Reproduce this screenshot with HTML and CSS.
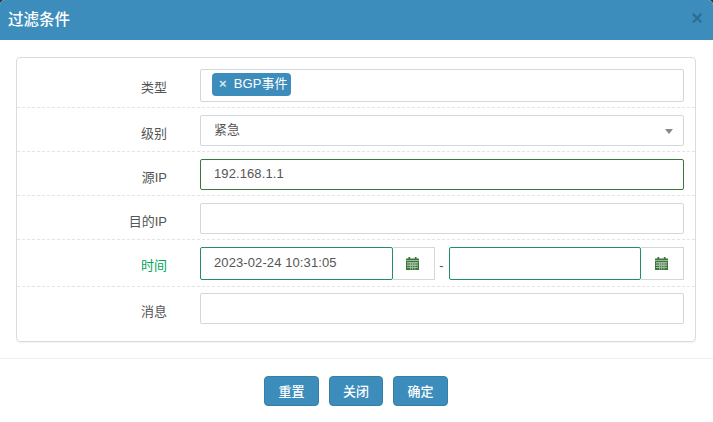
FILE: index.html
```html
<!DOCTYPE html>
<html lang="zh">
<head>
<meta charset="utf-8">
<title>过滤条件</title>
<link rel="stylesheet" href="styles.css">
</head>
<body>
<div class="modal">
  <header class="modal-head">
    <h4 class="modal-title">过滤条件</h4>
    <span class="close">×</span>
  </header>
  <div class="modal-body">
    <div class="panel">
      <div class="row row-first">
        <label class="label">类型</label>
        <div class="control tags"><span class="tag"><span class="tag-x">×</span>BGP事件</span></div>
      </div>
      <div class="row">
        <label class="label">级别</label>
        <div class="control select">紧急<span class="caret"></span></div>
      </div>
      <div class="row">
        <label class="label">源IP</label>
        <div class="control ok-dark">192.168.1.1</div>
      </div>
      <div class="row">
        <label class="label">目的IP</label>
        <div class="control"></div>
      </div>
      <div class="row row-time">
        <label class="label label-ok">时间</label>
        <div class="range">
          <div class="control date ok">2023-02-24 10:31:05</div>
          <span class="addon addon-narrow"><svg class="cal" viewBox="0 0 13 13"><path d="M0 3.4V1.4h2.4V0h1.8v1.4h4.6V0h1.8v1.4H13v2z"/><path fill-rule="evenodd" d="M0 4h13v9H0zM1 5.6v.6h11v-.6zM1 7.8v.6h11v-.6zM1 10v.6h11V10zM4 5v7.4h.5V5zM6.3 5v7.4h.5V5zM8.7 5v7.4h.5V5z"/></svg></span>
          <span class="dash">-</span>
          <div class="control date ok"></div>
          <span class="addon"><svg class="cal" viewBox="0 0 13 13"><path d="M0 3.4V1.4h2.4V0h1.8v1.4h4.6V0h1.8v1.4H13v2z"/><path fill-rule="evenodd" d="M0 4h13v9H0zM1 5.6v.6h11v-.6zM1 7.8v.6h11v-.6zM1 10v.6h11V10zM4 5v7.4h.5V5zM6.3 5v7.4h.5V5zM8.7 5v7.4h.5V5z"/></svg></span>
        </div>
      </div>
      <div class="row row-last">
        <label class="label">消息</label>
        <div class="control"></div>
      </div>
    </div>
  </div>
  <footer class="modal-foot">
    <button class="btn btn-a">重置</button>
    <button class="btn btn-b">关闭</button>
    <button class="btn btn-a">确定</button>
  </footer>
</div>
</body>
</html>
```

FILE: styles.css
```css
* { box-sizing: border-box; }
html, body { margin: 0; padding: 0; }
body {
  width: 713px;
  height: 422px;
  overflow: hidden;
  background: #2a3a44;
  font-family: "Liberation Sans", "Noto Sans CJK SC", sans-serif;
  font-size: 13px;
  color: #555;
}
.modal {
  height: 422px;
  background: #fff;
  border-radius: 5px 5px 0 0;
  overflow: hidden;
  display: flex;
  flex-direction: column;
}
.modal-head {
  height: 40px;
  flex: none;
  background: #3c8dbc;
  color: #fff;
  display: flex;
  align-items: center;
  justify-content: space-between;
  padding: 0 10px 0 8px;
}
.modal-title {
  margin: 0;
  font-size: 15.5px;
  font-weight: 500;
  line-height: 40px;
}
.close {
  font-size: 20px;
  font-weight: 700;
  line-height: 1;
  color: #000;
  opacity: .22;
  margin-top: -4px;
}
.modal-body {
  height: 319px;
  flex: none;
  padding: 17px 17px 0 16px;
  border-bottom: 1px solid #f0f0f0;
}
.panel {
  height: 285px;
  border: 1px solid #d9dcdf;
  border-radius: 4px;
  box-shadow: 0 1px 1px rgba(0,0,0,.05);
}
.row {
  display: flex;
  align-items: flex-start;
  height: 44px;
  padding: 7px 11px 0 0;
  border-bottom: 1px dashed #e4e4e4;
}
.row-first { height: 50px; padding-top: 11px; }
.row-time { height: 47px; }
.row-last { height: 55px; padding-top: 6px; border-bottom: 0; }
.label {
  width: 150px;
  flex: none;
  margin-right: 33px;
  padding-top: 10px;
  text-align: right;
  line-height: 18px;
  color: #555;
}
.label-ok { color: #00a65a; }
.control {
  flex: 1;
  min-width: 0;
  height: 31px;
  line-height: 27px;
  padding: 0 13px;
  border: 1px solid #d2d6de;
  border-radius: 2px;
  color: #555;
  letter-spacing: .1px;
}
.tags {
  height: 33px;
  padding: 3px 11px;
  display: flex;
  align-items: flex-start;
}
.tag {
  height: 23px;
  line-height: 22px;
  padding: 0 0 0 7px;
  width: 79px;
  background: #3c8dbc;
  border-radius: 4px;
  color: #fff;
  white-space: nowrap;
}
.tag-x {
  color: #d5e6f0;
  font-weight: 700;
  margin-right: 7px;
}
.select { position: relative; }
.caret {
  position: absolute;
  right: 10px;
  top: 13px;
  border-style: solid;
  border-width: 5px 4px 0;
  border-color: #888 transparent transparent;
}
.ok-dark { border-color: #3c763d; }
.range {
  flex: 1;
  min-width: 0;
  display: flex;
  align-items: stretch;
  height: 33px;
}
.date {
  height: 33px;
  line-height: 29px;
  border-color: #1d8f6a;
  border-radius: 2px;
}
.addon {
  width: 43px;
  flex: none;
  display: flex;
  align-items: center;
  justify-content: center;
  padding-right: 2px;
  border: 1px solid #d2d6de;
  border-left: 0;
}
.addon-narrow { width: 42px; }
.cal { width: 13px; height: 13px; fill: #3c763d; }
.dash {
  width: 14px;
  flex: none;
  text-align: center;
  line-height: 38px;
  color: #555;
}
.modal-foot {
  flex: 1;
  display: flex;
  justify-content: center;
  align-items: flex-start;
  gap: 10px;
  padding: 17px 1px 0 0;
}
.btn {
  height: 30px;
  padding: 0 0 2px;
  background: #3c8dbc;
  border: 1px solid #367fa9;
  border-radius: 4px;
  color: #fff;
  font: inherit;
  font-weight: 500;
}
.btn-a { width: 55px; }
.btn-b { width: 54px; }
```
